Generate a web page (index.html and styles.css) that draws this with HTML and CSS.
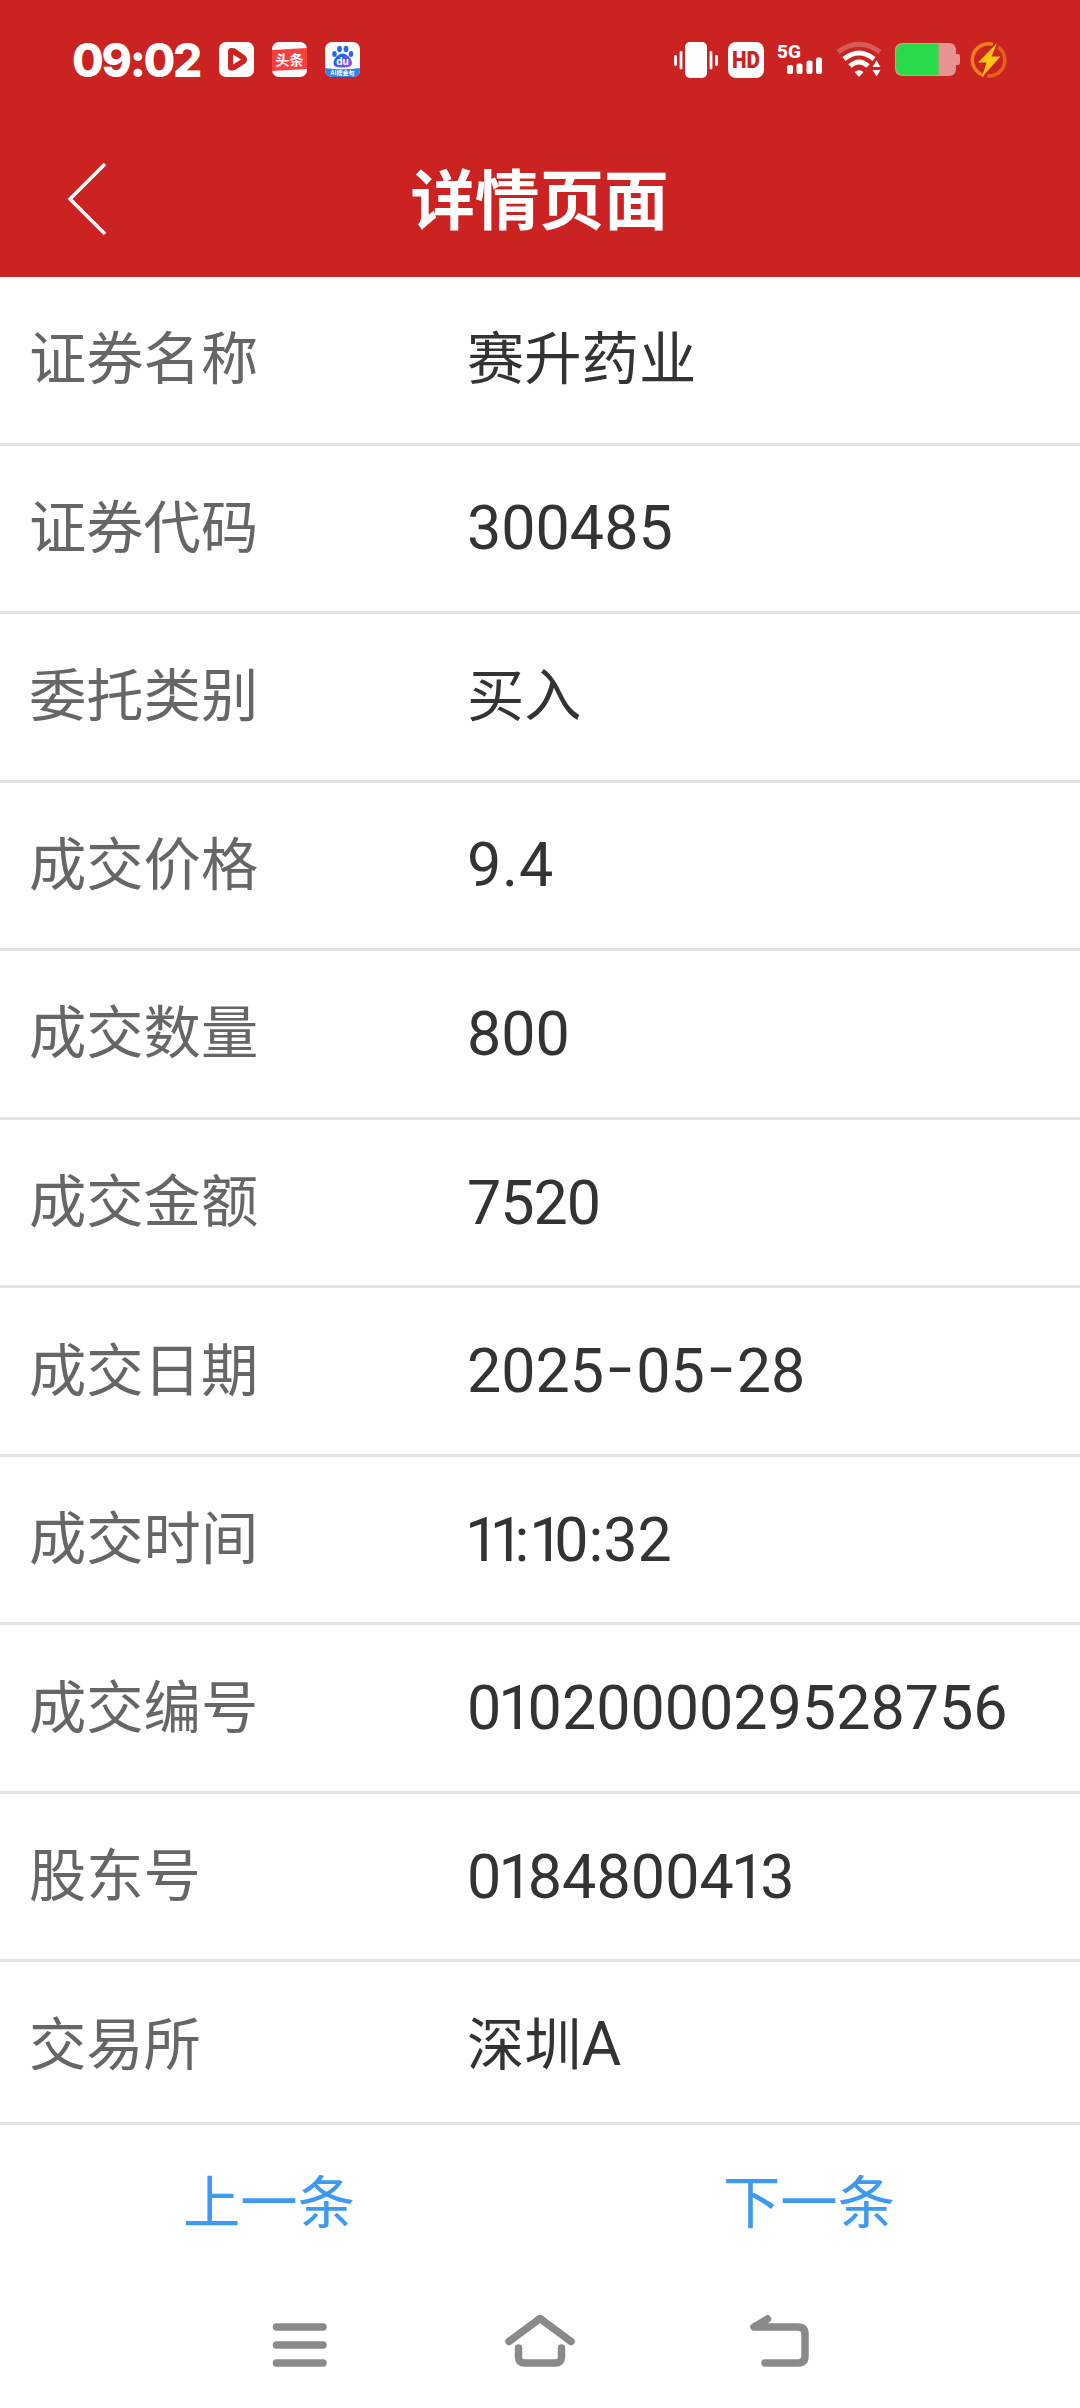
FILE: index.html
```
<!DOCTYPE html>
<html lang="zh-CN">

<head>
    <meta charset="UTF-8">
    <meta name="viewport" content="width=device-width, initial-scale=1.0">
    <title>详情页面</title>
    <link rel="stylesheet" href="styles.css">
</head>

<body>
    <header class="header">
        <div class="status-bar">
            <div class="status-left">
                <span class="clock">09:02</span>
                <svg class="app-icon" viewBox="0 0 35 35">
                    <rect width="35" height="35" rx="7" fill="#fff"/>
                    <path d="M9 9.500 Q9 5.500 13 6 L16 6.500 L26 13.500 Q30 17.500 26 21.500 L16 28 L13 28.500 Q9 29 9 25.500 Z" fill="#cb2322"/>
                    <path d="M14 12.500 L22 17.500 L14 22.500 Z" fill="#fff"/>
                </svg>
                <svg class="app-icon" viewBox="0 0 35 35">
                    <rect width="35" height="35" rx="7" fill="#fff"/>
                    <path d="M0 8 L35 6 V27 L0 29 Z" fill="#f8403f"/>
                    <text x="17.500" y="22.500" class="toutiao-text">头条</text>
                </svg>
                <svg class="app-icon" viewBox="0 0 35 35">
                    <defs>
                        <linearGradient id="paw" x1="0" y1="0" x2="1" y2="1">
                            <stop offset="0.3" stop-color="#2468f2"/>
                            <stop offset="1" stop-color="#a44be0"/>
                        </linearGradient>
                        <clipPath id="round"><rect width="35" height="35" rx="7"/></clipPath>
                    </defs>
                    <g clip-path="url(#round)">
                        <rect width="35" height="35" fill="#fff"/>
                        <ellipse cx="9.500" cy="12" rx="2.300" ry="3" fill="#2468f2"/>
                        <ellipse cx="14.500" cy="7" rx="2.400" ry="3.200" fill="#2468f2"/>
                        <ellipse cx="21" cy="7" rx="2.400" ry="3.200" fill="#2468f2"/>
                        <ellipse cx="26" cy="12" rx="2.300" ry="3" fill="#2468f2"/>
                        <path d="M17.500 11.500 C22 11.500 27 17 27 21 C27 25 23 25.500 17.500 25.500 C12 25.500 8.500 25 8.500 21 C8.500 17 13 11.500 17.500 11.500 Z" fill="url(#paw)"/>
                        <text x="17.500" y="23" class="du-text">du</text>
                        <path d="M0 26 Q17.500 28.500 35 26 V35 H0 Z" fill="#2c86ee"/>
                        <text x="17.500" y="33" class="ai-text">AI搜金句</text>
                    </g>
                </svg>
            </div>
            <div class="status-right">
                <svg class="icon-vibrate" viewBox="0 0 44 36">
                    <rect x="11" width="22" height="36" rx="5" fill="#fff"/>
                    <path d="M1.500 14.500 V22.500 M7 10.500 V26 M37 10.500 V26 M42.500 14.500 V22.500" stroke="#fff" stroke-width="2.800" stroke-linecap="round"/>
                </svg>
                <svg class="icon-hd" viewBox="0 0 36 36">
                    <rect width="36" height="36" rx="8" fill="#fff"/>
                    <text x="4" y="26" textLength="28" lengthAdjust="spacingAndGlyphs" class="hd-text">HD</text>
                </svg>
                <svg class="icon-signal" viewBox="0 0 46 32">
                    <text x="0" y="14" class="signal-text">5G</text>
                    <rect x="10" y="21" width="6" height="9" rx="2" fill="#fff"/>
                    <rect x="19.500" y="19.500" width="6" height="10.500" rx="2" fill="#fff"/>
                    <rect x="29.500" y="16.500" width="6" height="13.500" rx="2" fill="#fff"/>
                    <rect x="39" y="13.500" width="6" height="16.500" rx="2" fill="#fff"/>
                </svg>
                <svg class="icon-wifi" viewBox="0 0 44 36">
                    <g fill="none" stroke="#fff">
                        <path d="M1 10 Q22 -5.500 43 10" stroke-width="5" opacity="0.250"/>
                        <path d="M7 17 Q22 5 37 17" stroke-width="5"/>
                        <path d="M13 24 Q22 16 31 24" stroke-width="5"/>
                    </g>
                    <path d="M17.500 30 Q22 26.500 26.500 30 L22 35 Z" fill="#fff"/>
                    <path d="M35.500 25 L39.500 18.500 L43.500 25 Z M35.500 28 L39.500 34.500 L43.500 28 Z" fill="#fff"/>
                </svg>
                <svg class="icon-battery" viewBox="0 0 65 33">
                    <path d="M8 0 H54 Q61 0 61 8 V11 H63 Q65 11 65 14 V19 Q65 22 63 22 H61 V25 Q61 33 54 33 H8 Q0 33 0 25 V8 Q0 0 8 0 Z" fill="#e89291"/>
                    <path d="M8.500 1 H43.500 V32 H8.500 Q1 32 1 24.500 V8.500 Q1 1 8.500 1 Z" fill="#29da4a"/>
                </svg>
                <svg class="icon-charge" viewBox="0 0 36 36">
                    <path d="M22 2.500 A16 16 0 0 0 13 33.500" fill="none" stroke="#f07f18" stroke-width="3.500"/>
                    <path d="M27 5 A16 16 0 0 1 16 34" fill="none" stroke="#e0601c" stroke-width="3.500"/>
                    <path d="M26 1 L7 20.500 H15.500 L11 35 L29.500 14.500 H20.500 Z" fill="#ffc414"/>
                </svg>
            </div>
        </div>
        <div class="title-bar">
            <svg class="back-arrow" viewBox="0 0 40 72">
                <path d="M38 1 L3 36 L38 71" fill="none" stroke="#fff" stroke-width="3.500"/>
            </svg>
            <h1 class="title">详情页面</h1>
        </div>
    </header>

    <main class="detail-list">
        <div class="row"><span class="label">证券名称</span><span class="value">赛升药业</span></div>
        <div class="row"><span class="label">证券代码</span><span class="value num">300485</span></div>
        <div class="row"><span class="label">委托类别</span><span class="value">买入</span></div>
        <div class="row"><span class="label">成交价格</span><span class="value num price">9.4</span></div>
        <div class="row"><span class="label">成交数量</span><span class="value num">800</span></div>
        <div class="row"><span class="label">成交金额</span><span class="value num amount">7520</span></div>
        <div class="row"><span class="label">成交日期</span><span class="value num">2025<i>-</i>05<i>-</i>28</span></div>
        <div class="row"><span class="label">成交时间</span><span class="value num time"><b>11</b>:<b>1</b>0:32</span></div>
        <div class="row"><span class="label">成交编号</span><span class="value num">0<b>1</b>02000029528756</span></div>
        <div class="row"><span class="label">股东号</span><span class="value num holder-no">0<b>1</b>848004<b>1</b>3</span></div>
        <div class="row"><span class="label">交易所</span><span class="value">深圳<span class="latin">A</span></span></div>
    </main>

    <div class="pager">
        <a class="pager-link">上一条</a>
        <a class="pager-link">下一条</a>
    </div>

    <nav class="nav-bar">
        <svg class="nav-icon" viewBox="0 0 80 60">
            <path d="M16.500 12 H63 M16.500 30 H63 M16.500 48 H63" class="nav-line"/>
        </svg>
        <svg class="nav-icon" viewBox="0 0 80 60">
            <path d="M9 26.500 L40 3.500 L71 26.500 M18.500 33 V42 Q18.500 48 25 48 H55 Q61.500 48 61.500 42 V33" class="nav-line"/>
        </svg>
        <svg class="nav-icon" viewBox="0 0 80 60">
            <path d="M27.500 4 L14 12 H58 Q65 12 65 19 V41 Q65 48 58 48 H25" class="nav-line"/>
        </svg>
    </nav>
</body>

</html>
```
FILE: styles.css
```
* {
    box-sizing: border-box;
}

body {
    margin: 0;
    width: 1080px;
    height: 2408px;
    display: flex;
    flex-direction: column;
    background-color: #fefefe;
    font-family: "Noto Sans CJK SC", sans-serif;
    overflow: hidden;
}

svg {
    display: block;
    flex: none;
    overflow: visible;
}

.header {
    height: 277px;
    background-color: #cb2322;
    color: #fff;
}

.status-bar {
    display: flex;
    justify-content: space-between;
    align-items: center;
    height: 119px;
    padding: 0 73px 0 72px;
}

.status-left,
.status-right {
    display: flex;
    align-items: center;
}

.clock {
    width: 147px;
    font-family: Inter, sans-serif;
    font-size: 46px;
    font-weight: 800;
    letter-spacing: -2.300px;
    line-height: 60px;
    white-space: nowrap;
}

.app-icon {
    width: 35px;
    height: 35px;
    margin-right: 18px;
}

.toutiao-text {
    font-size: 14px;
    font-weight: 700;
    fill: #fff;
    text-anchor: middle;
}

.du-text {
    font-family: Inter, sans-serif;
    font-size: 10px;
    font-weight: 700;
    fill: #fff;
    text-anchor: middle;
}

.ai-text {
    font-size: 6px;
    font-weight: 700;
    fill: #fff;
    text-anchor: middle;
}

.icon-vibrate {
    width: 44px;
    height: 36px;
    margin-right: 10px;
}

.icon-hd {
    width: 36px;
    height: 36px;
    margin-right: 13px;
}

.hd-text {
    font-family: Roboto, sans-serif;
    font-size: 23px;
    font-weight: 900;
    fill: #cb2322;
}

.icon-signal {
    width: 46px;
    height: 32px;
    margin-right: 14px;
}

.signal-text {
    font-family: Roboto, sans-serif;
    font-size: 19px;
    font-weight: 800;
    fill: #fff;
}

.icon-wifi {
    width: 44px;
    height: 36px;
    margin-right: 14px;
}

.icon-battery {
    width: 65px;
    height: 33px;
    margin-right: 11px;
}

.icon-charge {
    width: 36px;
    height: 36px;
}

.title-bar {
    display: grid;
    grid-template-columns: 108px 1fr 108px;
    align-items: center;
    height: 158px;
}

.back-arrow {
    width: 40px;
    height: 72px;
    margin: 2px 0 0 67px;
}

.title {
    margin: 0 1px 5px 0;
    font-size: 64.500px;
    font-weight: 700;
    line-height: 80px;
    text-align: center;
}

.detail-list {
    height: 1845px;
    overflow: hidden;
}

.row {
    display: flex;
    align-items: center;
    height: 168.556px;
    padding-left: 29px;
    border-bottom: 3px solid #e3e3e3;
    font-size: 57.300px;
    line-height: 80px;
}

.label,
.value {
    padding-bottom: 9px;
}

.label {
    width: 438px;
    color: #666;
}

.value {
    color: #333;
    white-space: nowrap;
}

.num,
.latin {
    font-family: Roboto, sans-serif;
    font-size: 61px;
}

.num {
    padding-bottom: 0;
}

.latin {
    line-height: 0;
}

/* narrow "1" */
.num b {
    margin-left: -3px;
    letter-spacing: -5px;
    font-weight: 400;
}

/* wide dash in dates */
.num i {
    display: inline-block;
    width: 32px;
    font-style: normal;
    text-align: center;
    transform: translateY(-4px) scaleX(1.4);
}

.price {
    letter-spacing: 0.800px;
}

.amount {
    letter-spacing: -1px;
}

.time {
    margin-left: -2px;
}

.time b {
    margin-left: 0;
    letter-spacing: -9.500px;
}

.holder-no {
    letter-spacing: 0.100px;
}

.pager {
    display: flex;
    height: 162px;
    border-top: 3px solid #e3e3e3;
}

.pager-link {
    flex: 1;
    padding-right: 2px;
    color: #3d9af0;
    font-size: 57.300px;
    line-height: 148px;
    text-align: center;
}

.nav-bar {
    display: flex;
    justify-content: center;
    align-items: center;
    gap: 160px;
    height: 122px;
}

.nav-icon {
    width: 80px;
    height: 60px;
}

.nav-line {
    fill: none;
    stroke: #8a8a8a;
    stroke-width: 7.500;
    stroke-linecap: round;
    stroke-linejoin: round;
}
```
